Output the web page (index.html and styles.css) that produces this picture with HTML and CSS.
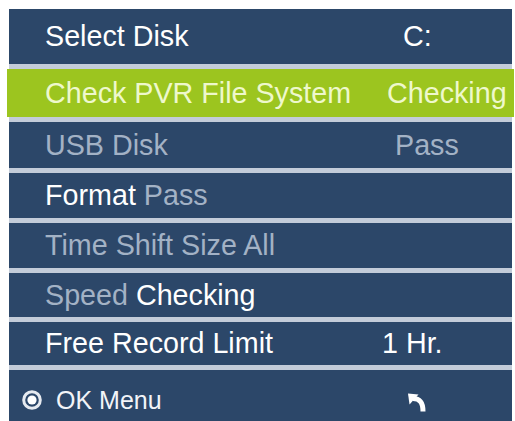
FILE: index.html
```html
<!DOCTYPE html>
<html>
<head>
<meta charset="utf-8">
<link rel="stylesheet" href="styles.css">
</head>
<body>
<div class="panel">
  <div class="row r1"><span class="label">Select Disk</span><span class="val v-c">C:</span></div>
  <div class="row sel"><span class="label">Check PVR File System</span><span class="val v-chk">Checking</span></div>
  <div class="row r3 dim"><span class="label">USB Disk</span><span class="val v-pass">Pass</span></div>
  <div class="row r4"><span class="label">Format <span class="dim">Pass</span></span></div>
  <div class="row r5 dim"><span class="label">Time Shift Size All</span></div>
  <div class="row r6"><span class="label"><span class="dim">Speed</span> Checking</span></div>
  <div class="row r7"><span class="label">Free Record Limit</span><span class="val">1 Hr.</span></div>
  <div class="footer">
    <div class="ok">
      <svg class="okicon" viewBox="0 0 20 20">
        <circle cx="10" cy="10" r="8.3" fill="none" stroke="#e6eaf0" stroke-width="3"/>
        <circle cx="10" cy="10" r="4.6" fill="#ffffff"/>
      </svg>
      <span>OK Menu</span>
    </div>
    <svg class="back" viewBox="0 0 18 20">
      <polygon points="0,0.5 10.5,1.5 1.5,11.5" fill="#ffffff"/>
      <path d="M5,5.5 C12,5.5 15,9.5 15,18.5" fill="none" stroke="#ffffff" stroke-width="5"/>
    </svg>
  </div>
</div>
</body>
</html>
```
FILE: styles.css
```css
html, body {
  margin: 0;
  padding: 0;
  background: #ffffff;
}
body {
  font-family: "Liberation Sans", Arial, sans-serif;
  width: 515px;
  height: 421px;
  overflow: hidden;
}
.panel {
  margin: 9px 0 0 9px;
  width: 503px;
  background: #c3ccd9;
  display: flex;
  flex-direction: column;
  gap: 5px;
}
.row {
  display: grid;
  grid-template-columns: 337px 1fr;
  align-items: center;
  padding-left: 36px;
  background: #2c4769;
  color: #ffffff;
  font-size: 28.7px;
  line-height: 1;
  white-space: nowrap;
  height: 45px;
}
.r1 { height: 55px; }
.sel {
  height: 48px;
  background: #9cc51f;
  color: #eef8cc;
  margin: 0 -2px;
  padding-left: 38px;
}
.r3 { height: 46px; }
.r4 { height: 45px; }
.r5 { height: 45px; }
.r6 { height: 44px; }
.r7 { height: 43px; }
.dim { color: #a3b2c5; }
.val { display: block; }
.v-c { padding-left: 21px; }
.v-chk { padding-left: 5px; }
.v-pass { padding-left: 13px; }
.footer {
  box-sizing: border-box;
  height: 51px;
  background: #2c4769;
  display: flex;
  align-items: center;
  justify-content: space-between;
  padding: 9px 86px 0 13px;
  color: #ffffff;
  font-size: 25px;
}
.ok {
  display: flex;
  align-items: center;
  gap: 14px;
  color: #f2f4f8;
}
.okicon {
  display: block;
  flex: none;
  width: 20px;
  height: 20px;
}
.back {
  display: block;
  flex: none;
  width: 18px;
  height: 20px;
  margin-top: 5px;
}
```
